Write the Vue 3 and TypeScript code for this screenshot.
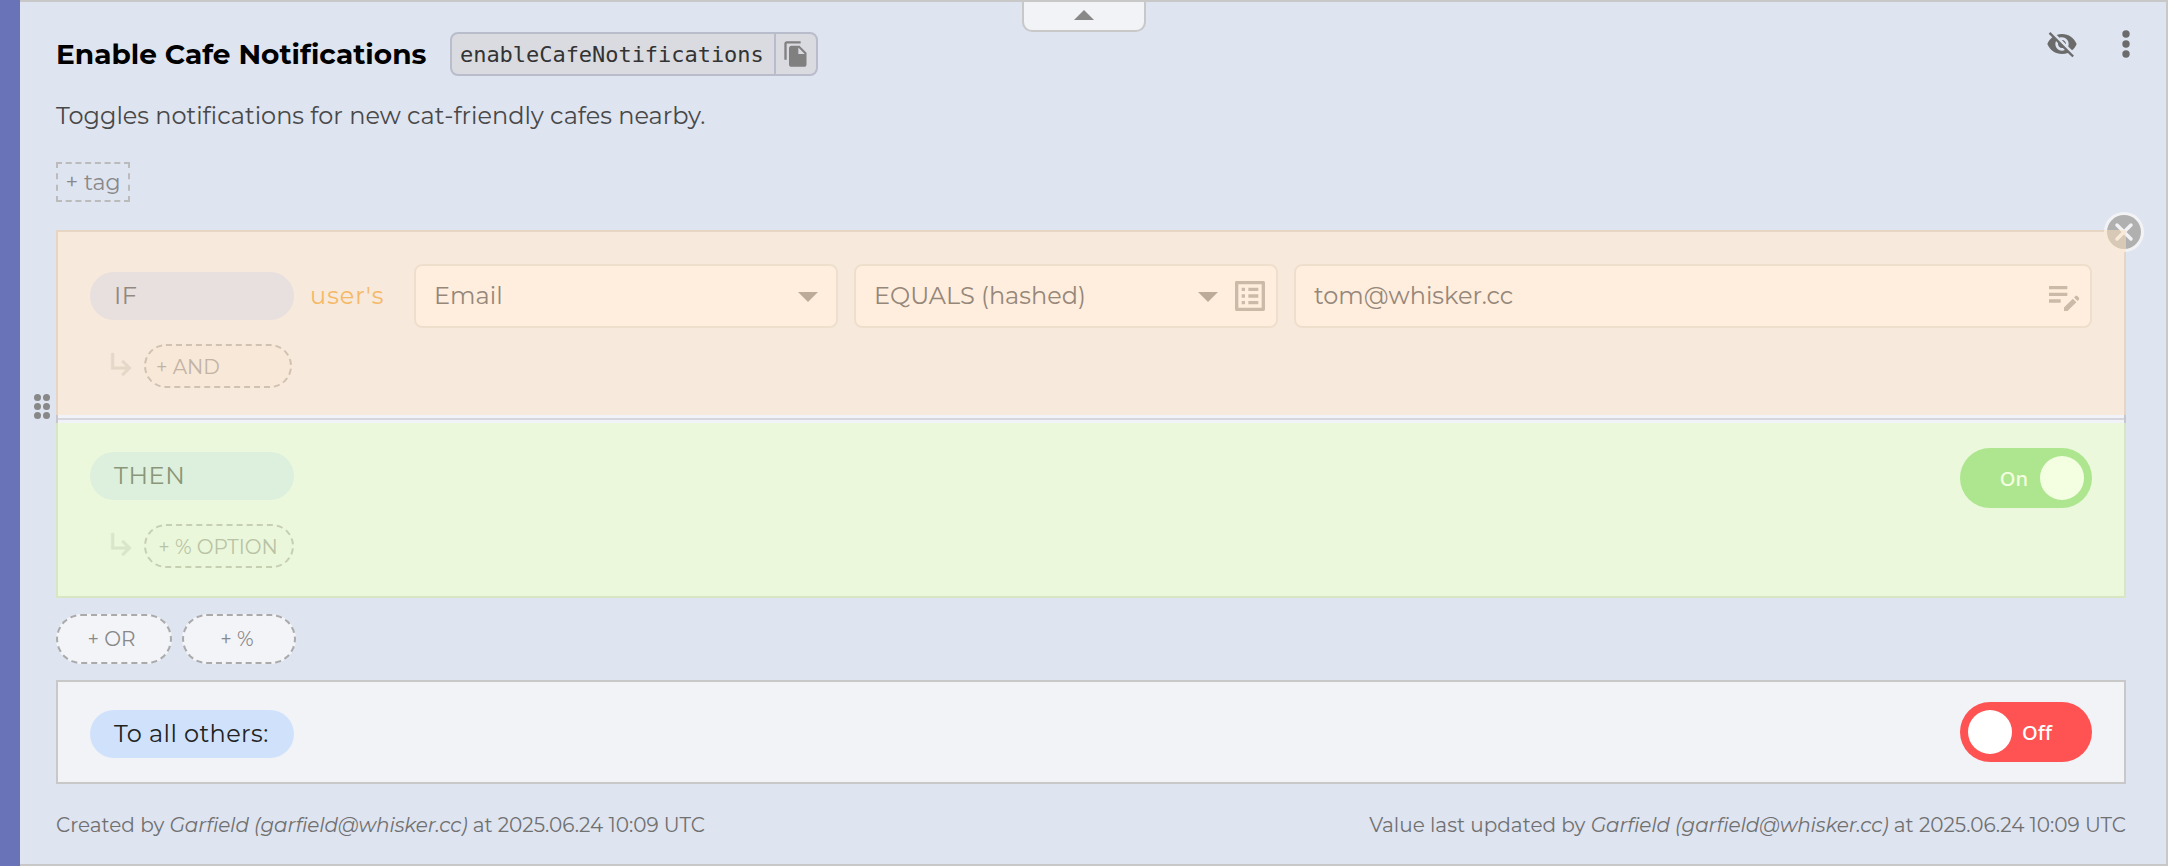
<script setup lang="ts">
interface Stamp {
  lead: string
  author: string
  time: string
}

const flagName = 'Enable Cafe Notifications'
const flagKey = 'enableCafeNotifications'
const description = 'Toggles notifications for new cat-friendly cafes nearby.'
const author = 'Garfield (garfield@whisker.cc)'
const stamps: Stamp[] = [
  { lead: 'Created by', author, time: 'at 2025.06.24 10:09 UTC' },
  { lead: 'Value last updated by', author, time: 'at 2025.06.24 10:09 UTC' },
]
const dots: number[] = [0, 1, 2, 3, 4, 5]
</script>

<template>
  <article class="flag">
    <button class="collapse" aria-label="Collapse">
      <svg width="20" height="10" viewBox="0 0 20 10"><path d="M0 10 10 0l10 10z" /></svg>
    </button>

    <header class="head">
      <h2 class="title">{{ flagName }}</h2>
      <div class="key">
        <code class="key-text">{{ flagKey }}</code>
        <span class="key-copy">
          <svg width="28" height="28" viewBox="0 0 24 24"><path d="M16 1H4c-1.100 0-2 .9-2 2v14h2V3h12V1zm-1 4 6 6v10c0 1.100-.9 2-2 2H7.990C6.890 23 6 22.100 6 21l.01-14c0-1.100.89-2 1.990-2h7zm-1 7h5.500L14 6.500V12z" /></svg>
        </span>
      </div>
      <div class="actions">
        <svg class="eye" width="32" height="32" viewBox="0 0 24 24"><path d="M12 7c2.760 0 5 2.240 5 5 0 .65-.13 1.260-.36 1.830l2.920 2.920c1.510-1.260 2.700-2.890 3.430-4.750-1.730-4.390-6-7.500-11-7.500-1.400 0-2.740.25-3.980.7l2.160 2.160C10.740 7.130 11.350 7 12 7zM2 4.270l2.280 2.280.46.46C3.080 8.300 1.780 10.020 1 12c1.730 4.390 6 7.500 11 7.500 1.550 0 3.030-.3 4.380-.84l.42.42L19.730 22 21 20.730 3.270 3 2 4.270zM7.530 9.800l1.550 1.550c-.05.21-.08.43-.08.65 0 1.660 1.340 3 3 3 .22 0 .44-.03.65-.08l1.550 1.550c-.67.33-1.410.53-2.200.53-2.760 0-5-2.240-5-5 0-.79.2-1.530.53-2.200zm4.310-.78 3.150 3.150.02-.16c0-1.660-1.340-3-3-3l-.17.01z" /></svg>
        <svg class="more" width="8" height="28" viewBox="0 0 8 28"><circle cx="4" cy="4" r="3.700" /><circle cx="4" cy="14" r="3.700" /><circle cx="4" cy="24" r="3.700" /></svg>
      </div>
    </header>

    <p class="desc">{{ description }}</p>
    <button class="tag">+ tag</button>

    <section class="rule">
      <svg class="remove" width="40" height="40" viewBox="0 0 40 40">
        <circle class="ring" cx="20" cy="20" r="20" />
        <circle class="disc" cx="20" cy="20" r="17" />
        <path class="cross" d="m13 13 14 14M27 13 13 27" />
        <path class="tint" d="M0 20A20 20 0 0 1 .1 18H22v21.900A20 20 0 0 1 0 20z" />
      </svg>
      <div class="grip"><i v-for="d in dots" :key="d" class="grip-dot"></i></div>

      <div class="part if-part">
        <div class="line">
          <span class="pill if-pill">IF</span>
          <span class="subject">user's</span>
          <div class="field pick">
            <span class="field-text">Email</span>
            <svg class="caret end" width="20" height="10" viewBox="0 0 20 10"><path d="M0 0h20L10 10z" /></svg>
          </div>
          <div class="field pick">
            <span class="field-text">EQUALS (hashed)</span>
            <svg class="caret mid" width="20" height="10" viewBox="0 0 20 10"><path d="M0 0h20L10 10z" /></svg>
            <svg class="tool" width="40" height="40" viewBox="0 0 24 24"><path d="M19 5v14H5V5h14m1.100-2H3.900c-.5 0-.9.4-.9.9v16.200c0 .4.4.9.9.9h16.200c.4 0 .9-.5.9-.9V3.900c0-.5-.5-.9-.9-.9zM11 7h6v2h-6V7zm0 4h6v2h-6v-2zm0 4h6v2h-6v-2zM7 7h2v2H7V7zm0 4h2v2H7v-2zm0 4h2v2H7v-2z" /></svg>
          </div>
          <div class="field value">
            <span class="field-text">tom@whisker.cc</span>
            <svg class="tool" width="40" height="40" viewBox="0 0 24 24"><path d="M3 10h11v2H3v-2zm0-2h11V6H3v2zm0 8h7v-2H3v2zm15.010-3.130.71-.71c.39-.39 1.020-.39 1.410 0l.71.71c.39.39.39 1.020 0 1.410l-.71.71-2.120-2.120zm-.71.71-5.300 5.300V21h2.120l5.300-5.300-2.120-2.120z" /></svg>
          </div>
        </div>
        <div class="sub">
          <svg class="turn" width="32" height="32" viewBox="0 0 24 24"><path d="m19 15-6 6-1.420-1.420L15.170 16H4V4h2v10h9.170l-3.590-3.580L13 9l6 6z" /></svg>
          <button class="add and">+ AND</button>
        </div>
      </div>

      <div class="seam"></div>

      <div class="part then-part">
        <div class="line">
          <span class="pill then-pill">THEN</span>
          <div class="toggle on"><span>On</span><i class="knob"></i></div>
        </div>
        <div class="sub">
          <svg class="turn" width="32" height="32" viewBox="0 0 24 24"><path d="m19 15-6 6-1.420-1.420L15.170 16H4V4h2v10h9.170l-3.590-3.580L13 9l6 6z" /></svg>
          <button class="add option">+ % OPTION</button>
        </div>
      </div>
    </section>

    <div class="more-rules">
      <button class="add or">+ OR</button>
      <button class="add percent">+ %</button>
    </div>

    <section class="others">
      <span class="pill others-pill">To all others:</span>
      <div class="toggle off"><i class="knob"></i><span>Off</span></div>
    </section>

    <footer class="foot">
      <span v-for="s in stamps" :key="s.lead">{{ s.lead }} <em>{{ s.author }}</em> {{ s.time }}</span>
    </footer>
  </article>
</template>

<style>
body {
  margin: 0;
}
</style>

<style scoped>
.flag,
.flag * {
  box-sizing: border-box;
}

.flag {
  position: relative;
  height: 866px;
  padding: 30px 40px 0 36px;
  background: #dee4f0;
  border: 2px solid #c8c8c8;
  border-left: 20px solid #6974b8;
  font-family: Montserrat, Inter, "Open Sans", sans-serif;
  font-size: 24px;
}

/* Square off the mitred corners where the thick left bar meets the thin frame */
.flag::before {
  content: "";
  position: absolute;
  top: -2px;
  bottom: -2px;
  left: -20px;
  width: 20px;
  background: #6974b8;
}

button {
  display: block;
  margin: 0;
  padding: 0;
  font-family: inherit;
}

svg {
  display: block;
}

.collapse {
  position: absolute;
  top: -2px;
  left: 1002px;
  width: 124px;
  height: 32px;
  display: flex;
  justify-content: center;
  padding-top: 8px;
  background: #f2f3f7;
  border: 2px solid #c8c8c8;
  border-radius: 0 0 10px 10px;
}

.collapse svg {
  fill: #888;
}

.head {
  display: flex;
  height: 44px;
}

.title {
  width: 394px;
  margin: 0;
  font-size: 28px;
  font-weight: 700;
  line-height: 44px;
  white-space: nowrap;
  color: #000;
}

.key {
  display: flex;
  width: 368px;
  height: 44px;
  border: 2px solid #b9bdcb;
  border-radius: 8px;
  background: #dadbe0;
}

.key-text {
  width: 322px;
  padding-left: 8px;
  font: 22px/41px "DejaVu Sans Mono", monospace;
  letter-spacing: -0.04px;
  color: #333;
}

.key-copy {
  flex: 1;
  padding: 6px 0 0 6px;
  border-left: 2px solid #b9bdcb;
}

.key-copy svg {
  fill: #808080;
}

.actions {
  display: flex;
  gap: 44px;
  margin-left: auto;
  margin-right: -4px;
}

.actions svg {
  fill: #6b6b6b;
}

.eye {
  margin-top: -4px;
}

.more {
  margin-top: -2px;
}

.desc {
  height: 29px;
  margin: 25px 0 0;
  line-height: 29px;
  color: #484848;
}

.tag {
  width: 74px;
  height: 40px;
  margin-top: 32px;
  border: 2px dashed #bbb;
  background: transparent;
  font-size: 22px;
  line-height: 35px;
  color: #888;
}

.rule {
  position: relative;
  margin-top: 28px;
}

.part {
  padding: 0 32px;
  border: 2px solid;
}

.if-part {
  height: 185px;
  padding-top: 32px;
  background: #f7e9dc;
  border-color: #e6d5c2;
  border-bottom: 0;
}

.seam {
  height: 8px;
  border: solid #c8c8cc;
  border-width: 0 2px;
  background: linear-gradient(#f2f3f9 3px, #d6d7dd 3px, #d6d7dd 5px, #f2f3f9 5px);
}

.then-part {
  height: 175px;
  padding-top: 25px;
  background: #ebf8dc;
  border-color: #dae5c3;
  border-top: 0;
}

.line {
  display: flex;
  align-items: center;
  height: 64px;
}

.pill {
  width: 204px;
  height: 48px;
  padding-left: 24px;
  border-radius: 24px;
  line-height: 48px;
  letter-spacing: 0.6px;
  white-space: nowrap;
}

.if-pill {
  background: #e8e0de;
  color: #938980;
}

.subject {
  width: 104px;
  margin-left: 16px;
  padding-bottom: 2px;
  letter-spacing: 1px;
  color: #f5b865;
}

.field {
  display: flex;
  align-items: center;
  height: 64px;
  margin-right: 16px;
  padding-left: 18px;
  border: 2px solid #eedfcc;
  border-radius: 8px;
  background: #ffeedd;
  color: #95877a;
}

.field-text {
  padding-bottom: 2px;
}

.field svg {
  fill: #ccbaa8;
}

.field .caret {
  margin-left: auto;
  margin-top: 2px;
  fill: #bdab9a;
}

.field .end {
  margin-right: 18px;
}

.field .mid {
  margin-right: 12px;
}

.pick {
  width: 424px;
}

.pick .tool {
  margin-right: 6px;
}

.value {
  flex: 1;
  margin-right: 0;
}

.value .tool {
  margin-left: auto;
  margin-right: 6px;
}

.sub {
  display: flex;
  padding-left: 16px;
}

.if-part .sub {
  margin-top: 16px;
}

.then-part .sub {
  margin-top: 12px;
}

.turn {
  margin-top: 4px;
  stroke-width: 0.4;
}

.if-part .turn {
  fill: #e6d8c8;
  stroke: #e6d8c8;
}

.then-part .turn {
  fill: #dbe5c8;
  stroke: #dbe5c8;
}

.add {
  border: 2px dashed;
  font-size: 20px;
  white-space: nowrap;
}

.and,
.option {
  height: 44px;
  margin-left: 6px;
  padding-top: 2px;
  border-radius: 22px;
  line-height: 38px;
}

.and {
  width: 148px;
  padding-left: 10px;
  text-align: left;
  background: #f8e8d8;
  border-color: #d0c2b2;
  color: #c2b3a5;
}

.option {
  width: 150px;
  padding-right: 2px;
  background: #ebf7da;
  border-color: #c6cfb2;
  color: #b8c3a6;
}

.then-part .pill {
  margin-top: -8px;
}

.then-pill {
  background: #ddf0dd;
  color: #8a9678;
}

.toggle {
  display: flex;
  align-items: center;
  width: 132px;
  height: 60px;
  margin-left: auto;
  padding: 0 8px;
  border-radius: 30px;
  font-family: "Noto Sans", "Open Sans", sans-serif;
  font-size: 20px;
  font-weight: 500;
}

.knob {
  width: 44px;
  height: 44px;
  border-radius: 50%;
}

.on {
  justify-content: flex-end;
  gap: 12px;
  margin-top: -4px;
  background: #ade68f;
  color: #f3ffe0;
}

.on .knob {
  background: #f3ffe0;
}

.off {
  gap: 10px;
  background: #ff5252;
  color: #fff;
}

.off .knob {
  background: #fff;
}

.remove {
  position: absolute;
  top: -18px;
  right: -18px;
}

.ring {
  fill: #f3f3f6;
}

.disc {
  fill: #b0b0b0;
}

.cross {
  fill: none;
  stroke: #f3f3f6;
  stroke-width: 3.5;
  stroke-linecap: round;
}

.tint {
  fill: rgba(255, 224, 188, 0.5);
}

.grip {
  position: absolute;
  top: 163.5px;
  left: -22px;
  display: grid;
  grid-template-columns: 7px 7px;
  gap: 2px;
}

.grip-dot {
  width: 7px;
  height: 7px;
  border-radius: 50%;
  background: #888;
}

.more-rules {
  display: flex;
  gap: 10px;
  margin-top: 16px;
}

.or,
.percent {
  height: 50px;
  border-radius: 25px;
  border-color: #aaa;
  background: #f3f4f8;
  line-height: 46px;
  color: #888;
}

.or {
  width: 116px;
  padding-right: 5px;
}

.percent {
  width: 114px;
  padding-right: 4px;
}

.others {
  display: flex;
  align-items: center;
  height: 104px;
  margin-top: 16px;
  padding: 0 32px;
  border: 2px solid #c8c8c8;
  background: #f2f3f7;
}

.others-pill {
  margin-top: 4px;
  letter-spacing: 0.4px;
  background: #d0e2fb;
  color: #222;
}

.foot {
  display: flex;
  justify-content: space-between;
  margin-top: 29px;
  font-size: 20px;
  line-height: 24px;
  color: #707070;
}

.foot em {
  letter-spacing: -0.11px;
}
</style>
